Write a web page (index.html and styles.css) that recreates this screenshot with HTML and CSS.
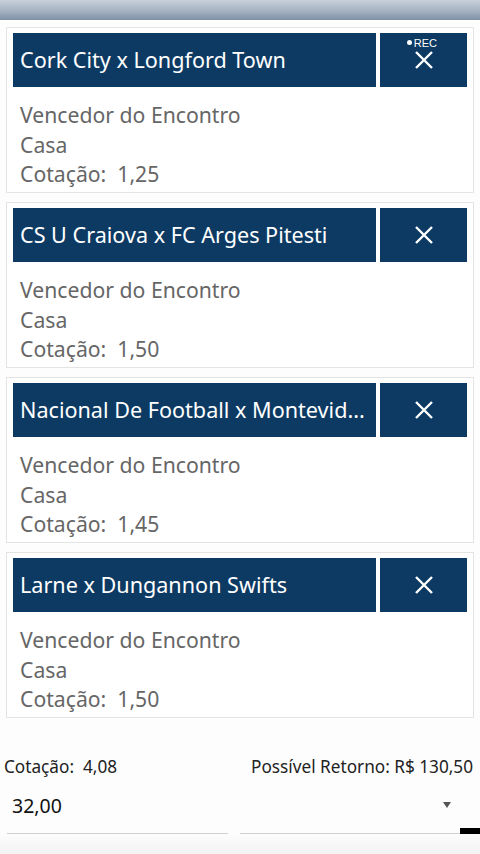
FILE: index.html
```html
<!DOCTYPE html>
<html lang="pt-BR">
<head>
    <meta charset="UTF-8">
    <meta name="viewport" content="width=device-width, initial-scale=1.0">
    <title>Cupom de Apostas</title>
    <link rel="stylesheet" href="styles.css">
</head>
<body>
    <div class="top-bar"></div>

    <div class="bet-list">
        <div class="bet-card">
            <div class="bet-header">
                <div class="bet-title">Cork City x Longford Town</div>
                <button class="bet-remove">
                    <span class="rec">REC</span>
                    <svg width="22" height="22" viewBox="0 0 22 22"><path d="M3 3 L19 19 M19 3 L3 19" stroke="#fff" stroke-width="2.4" fill="none"/></svg>
                </button>
            </div>
            <div class="bet-body">
                <div class="bet-market">Vencedor do Encontro</div>
                <div>Casa</div>
                <div>Cotação:&nbsp; 1,25</div>
            </div>
        </div>

        <div class="bet-card">
            <div class="bet-header">
                <div class="bet-title">CS U Craiova x FC Arges Pitesti</div>
                <button class="bet-remove">
                    <svg width="22" height="22" viewBox="0 0 22 22"><path d="M3 3 L19 19 M19 3 L3 19" stroke="#fff" stroke-width="2.4" fill="none"/></svg>
                </button>
            </div>
            <div class="bet-body">
                <div class="bet-market">Vencedor do Encontro</div>
                <div>Casa</div>
                <div>Cotação:&nbsp; 1,50</div>
            </div>
        </div>

        <div class="bet-card">
            <div class="bet-header">
                <div class="bet-title">Nacional De Football x Montevid...</div>
                <button class="bet-remove">
                    <svg width="22" height="22" viewBox="0 0 22 22"><path d="M3 3 L19 19 M19 3 L3 19" stroke="#fff" stroke-width="2.4" fill="none"/></svg>
                </button>
            </div>
            <div class="bet-body">
                <div class="bet-market">Vencedor do Encontro</div>
                <div>Casa</div>
                <div>Cotação:&nbsp; 1,45</div>
            </div>
        </div>

        <div class="bet-card">
            <div class="bet-header">
                <div class="bet-title">Larne x Dungannon Swifts</div>
                <button class="bet-remove">
                    <svg width="22" height="22" viewBox="0 0 22 22"><path d="M3 3 L19 19 M19 3 L3 19" stroke="#fff" stroke-width="2.4" fill="none"/></svg>
                </button>
            </div>
            <div class="bet-body">
                <div class="bet-market">Vencedor do Encontro</div>
                <div>Casa</div>
                <div>Cotação:&nbsp; 1,50</div>
            </div>
        </div>
    </div>

    <div class="summary">
        <span>Cotação:&nbsp; 4,08</span>
        <span>Possível Retorno: R$ 130,50</span>
    </div>

    <div class="stake">
        <span class="stake-value">32,00</span>
        <span class="stake-arrow"></span>
    </div>

    <div class="bottom-bar">
        <div class="bottom-line"></div>
        <div class="bottom-line"></div>
        <div class="bottom-mark"></div>
    </div>
</body>
</html>
```

FILE: styles.css
```css
body {
    font-family: "Noto Sans", Roboto, Arial, sans-serif;
    margin: 0;
    padding: 0;
    background-color: #fdfdfd;
    width: 480px;
    height: 854px;
    overflow: hidden;
}

.top-bar {
    height: 20px;
    background: linear-gradient(#c8d0da, #a5b2c2 55%, #7f90a6);
    border-bottom: 2px solid #ffffff;
}

.bet-list {
    display: flex;
    flex-direction: column;
    gap: 9px;
    padding: 5px 6px 0;
}

.bet-card {
    height: 166px;
    border: 1px solid #e4e4e4;
    background: #fff;
    padding: 5px 6px 0;
    box-sizing: border-box;
}

.bet-header {
    display: flex;
    gap: 4px;
    height: 54px;
}

.bet-title {
    flex: 1;
    min-width: 0;
    background-color: #0d3a63;
    color: #fff;
    font-size: 21.6px;
    line-height: 54px;
    padding: 0 7px;
    white-space: nowrap;
    overflow: hidden;
}

.bet-remove {
    position: relative;
    width: 87px;
    background-color: #0d3a63;
    border: none;
    padding: 0;
    display: flex;
    align-items: center;
    justify-content: center;
}

.rec {
    position: absolute;
    top: 4px;
    right: 30px;
    color: #fff;
    font-size: 11px;
}

.rec::before {
    content: "";
    display: inline-block;
    width: 5px;
    height: 5px;
    border-radius: 50%;
    background: #fff;
    margin-right: 2px;
    vertical-align: 2px;
}

.bet-body {
    padding: 13px 7px 0;
    color: #666;
    font-size: 21.2px;
    line-height: 29.5px;
}

.summary {
    display: flex;
    justify-content: space-between;
    padding: 0 7px 0 4px;
    margin-top: 37px;
    font-size: 17.2px;
    color: #222;
}

.stake {
    display: flex;
    justify-content: space-between;
    align-items: center;
    padding: 0 29px 0 12px;
    margin-top: 12px;
    height: 30px;
    font-size: 19.5px;
    color: #111;
}

.stake-arrow {
    width: 0;
    height: 0;
    border-left: 4px solid transparent;
    border-right: 4px solid transparent;
    border-top: 6px solid #555;
}

.bottom-bar {
    position: relative;
    display: flex;
    gap: 12px;
    padding: 0 20px 0 7px;
    margin-top: 13px;
    height: 25px;
    background: linear-gradient(#fdfdfd, #f0f0f0);
}

.bottom-line {
    flex: 1;
    height: 1px;
    background: #cfcfcf;
}

.bottom-mark {
    position: absolute;
    right: 0;
    top: -5px;
    width: 20px;
    height: 6px;
    background: #000;
}
```
